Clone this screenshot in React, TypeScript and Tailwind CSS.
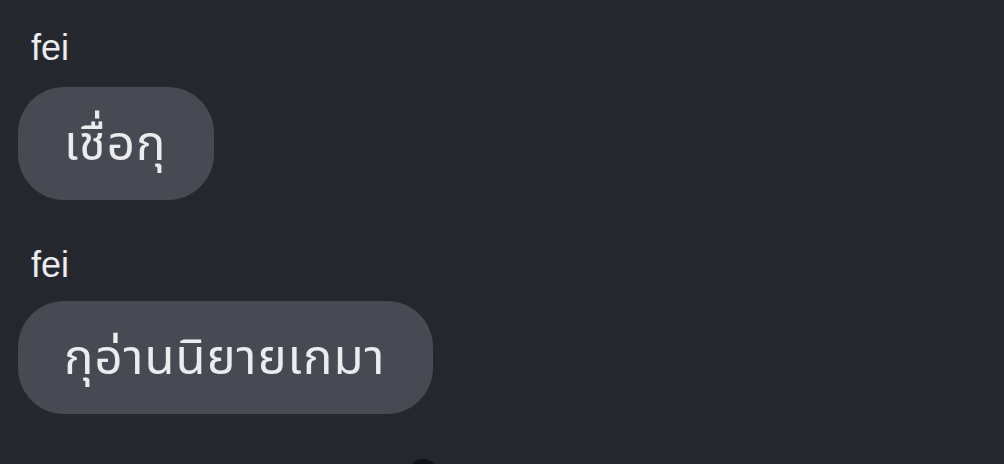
import React from 'react'

const messages = [
  { id: '1', sender: 'fei', text: 'เชื่อกุ' },
  { id: '2', sender: 'fei', text: 'กุอ่านนิยายเกมา' }
]

const App: React.FC = () => {
  return (
    <div
      className="h-[464px] w-full overflow-hidden bg-[#25272f] pl-[18px] text-[#ececee]"
      style={{ fontFamily: '"Liberation Sans", "Noto Sans Thai", "Noto Sans", sans-serif' }}
    >
      {messages.map((m, i) => (
        <div key={m.id} className={i === 0 ? 'pt-[30px]' : 'pt-[47px]'}>
          <div className="ml-[13px] text-[36px] leading-[36px]">{m.sender}</div>
          <div className={`${i === 0 ? 'mt-[21px]' : 'mt-[18px]'} inline-flex h-[113px] items-center rounded-[46px] bg-[#474a52] pl-[46px] pr-[48px]`}>
            <span className="text-[49px] leading-none tracking-[1px]">{m.text}</span>
          </div>
        </div>
      ))}
      <div className="ml-[390px] mt-[45px] h-[30px] w-[30px] rounded-full bg-[#101116]" />
    </div>
  )
}

export default App
